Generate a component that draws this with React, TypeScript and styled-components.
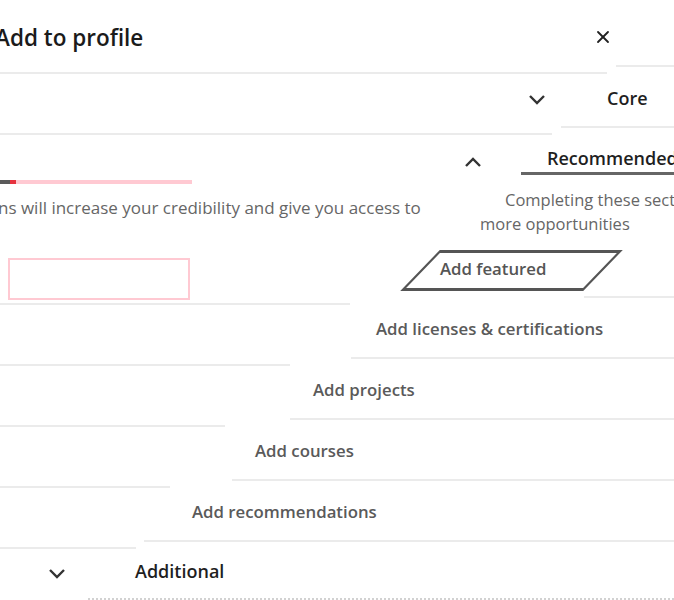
import styled, { createGlobalStyle } from 'styled-components'
import { X } from 'lucide-react'

const GlobalStyle = createGlobalStyle`
	body {
		margin: 0;
		background: #fff;
		font-family: 'Open Sans', 'Liberation Sans', sans-serif;
		overflow: hidden;
	}
`

const items = [
	{ label: 'Add licenses & certifications', indent: 376, a: 290, b: 351 },
	{ label: 'Add projects', indent: 313, a: 225, b: 290 },
	{ label: 'Add courses', indent: 255, a: 170, b: 232 },
	{ label: 'Add recommendations', indent: 192, a: 136, b: 144 },
]

function Chevron({ up }: { up?: boolean }) {
	return (
		<ChevronSvg width='18' height='10' viewBox='0 0 18 10'>
			<polyline points={up ? '2,9 9,2 16,9' : '2,1 9,8 16,1'} />
		</ChevronSvg>
	)
}

function Rules({ a, b }: { a: number; b: number }) {
	return (
		<RuleRow>
			<RuleA $w={a} />
			<RuleB $gap={b - a} />
		</RuleRow>
	)
}

export default function App() {
	return (
		<Page>
			<GlobalStyle />

			<Band $h={74}>
				<Content $indent={0} $pt={9}>
					<Title>Add to profile</Title>
					<CloseButton>
						<X size={20} strokeWidth={2.2} />
					</CloseButton>
				</Content>
				<Rules a={607} b={616} />
			</Band>

			<Band $h={61}>
				<Content $indent={528}>
					<Chevron />
					<Heading $gap={61}>Core</Heading>
				</Content>
				<Rules a={552} b={561} />
			</Band>

			<Band $h={105}>
				<Split>
					<LeftCol>
						<TopRow>
							<Dot />
							<ChevronSlot>
								<Chevron up />
							</ChevronSlot>
						</TopRow>
						<Progress>
							<ProgressPart $w={10} $c='#5a5a5a' />
							<ProgressPart $w={6} $c='#e6323e' />
							<ProgressPart $w={176} $c='#ffc9d2' />
						</Progress>
						<LeftText>ns will increase your credibility and give you access to</LeftText>
					</LeftCol>
					<RightCol>
						<SectionTitle>Recommended</SectionTitle>
						<Underline />
						<Description>
							<DescLine $indent={27}>Completing these sections will increase your credibility</DescLine>
							<DescLine $indent={2}>more opportunities</DescLine>
						</Description>
					</RightCol>
				</Split>
			</Band>

			<Band $h={65}>
				<Content $indent={8} $align='flex-start'>
					<PinkBox />
					<FeaturedButton>Add featured</FeaturedButton>
				</Content>
				<Rules a={350} b={584} />
			</Band>

			{items.map(item => (
				<Band key={item.label} $h={61}>
					<Content $indent={item.indent} $pb={6}>
						<ItemLabel>{item.label}</ItemLabel>
					</Content>
					<Rules a={item.a} b={item.b} />
				</Band>
			))}

			<Band $h={51}>
				<Content $indent={48}>
					<Chevron />
					<Heading $gap={69}>Additional</Heading>
				</Content>
				<DottedRule />
			</Band>
		</Page>
	)
}

const Page = styled.div`
	width: 674px;
	height: 600px;
	overflow: hidden;
	display: flex;
	flex-direction: column;
	color: #222;
`

const Band = styled.div<{ $h: number }>`
	height: ${({ $h }) => $h}px;
	flex-shrink: 0;
	display: flex;
	flex-direction: column;
`

const Content = styled.div<{ $indent: number; $pt?: number; $pb?: number; $align?: string }>`
	flex: 1;
	min-height: 0;
	display: flex;
	align-items: ${({ $align }) => $align || 'center'};
	padding-left: ${({ $indent }) => $indent}px;
	padding-top: ${({ $pt }) => $pt || 0}px;
	padding-bottom: ${({ $pb }) => $pb || 0}px;
`

const RuleRow = styled.div`
	height: 9px;
	display: flex;
	align-items: flex-start;
	flex-shrink: 0;
`

const RuleA = styled.div<{ $w: number }>`
	width: ${({ $w }) => $w}px;
	height: 2px;
	margin-top: 7px;
	background: #ebebeb;
`

const RuleB = styled.div<{ $gap: number }>`
	flex: 1;
	height: 2px;
	margin-left: ${({ $gap }) => $gap}px;
	background: #ebebeb;
`

const DottedRule = styled.div`
	margin-left: 88px;
	border-top: 2px dotted #d2d2d2;
`

const Title = styled.h2`
	margin: 0 0 0 -5px;
	font-size: 22.5px;
	font-weight: 600;
	color: #1b1b1b;
	white-space: nowrap;
`

const CloseButton = styled.div`
	margin-left: auto;
	margin-right: 61px;
	display: flex;
	color: #222;
`

const ChevronSvg = styled.svg`
	flex-shrink: 0;
	fill: none;
	stroke: #333;
	stroke-width: 2.4;
`

const Heading = styled.span<{ $gap: number }>`
	margin-left: ${({ $gap }) => $gap}px;
	margin-top: -5px;
	font-size: 18px;
	font-weight: 600;
	color: #1f1f1f;
	white-space: nowrap;
`

const Split = styled.div`
	display: flex;
	height: 100%;
`

const LeftCol = styled.div`
	width: 478px;
	flex-shrink: 0;
	display: flex;
	flex-direction: column;
`

const TopRow = styled.div`
	height: 38px;
	display: flex;
	align-items: flex-start;
`

const Dot = styled.div`
	width: 2px;
	height: 2px;
	margin: 19px 0 0 1px;
	background: #333;
`

const ChevronSlot = styled.div`
	margin: 22px 0 0 463px;
	display: flex;
`

const Progress = styled.div`
	margin-top: 7px;
	display: flex;
	height: 4px;
`

const ProgressPart = styled.div<{ $w: number; $c: string }>`
	width: ${({ $w }) => $w}px;
	background: ${({ $c }) => $c};
`

const LeftText = styled.p`
	margin: 13px 0 0 -2px;
	font-size: 17px;
	line-height: 22px;
	color: #666;
	white-space: nowrap;
`

const RightCol = styled.div`
	flex: 1;
	min-width: 0;
`

const SectionTitle = styled.div`
	margin-top: 11px;
	padding-left: 69px;
	font-size: 18px;
	line-height: 24px;
	font-weight: 600;
	color: #1f1f1f;
	white-space: nowrap;
`

const Underline = styled.div`
	margin: 2px 0 0 43px;
	height: 3px;
	background: #666;
`

const Description = styled.div`
	margin-top: 13px;
	font-size: 16.5px;
	line-height: 24px;
	color: #666;
`

const DescLine = styled.div<{ $indent: number }>`
	padding-left: ${({ $indent }) => $indent}px;
	white-space: nowrap;
`

const PinkBox = styled.div`
	margin-top: 18px;
	width: 182px;
	height: 42px;
	box-sizing: border-box;
	border: 2px solid #ffc9d2;
	flex-shrink: 0;
`

const FeaturedButton = styled.div`
	position: relative;
	margin: 10px 0 0 230px;
	width: 183px;
	height: 41px;
	box-sizing: border-box;
	padding-left: 20px;
	font-size: 16.8px;
	line-height: 38px;
	font-weight: 600;
	color: #555;
	white-space: nowrap;

	&::before {
		content: '';
		position: absolute;
		inset: 0;
		border: 3px solid #555;
		transform: skewX(-44deg);
	}
`

const ItemLabel = styled.span`
	font-size: 16.8px;
	font-weight: 600;
	color: #5a5a5a;
	white-space: nowrap;
`
